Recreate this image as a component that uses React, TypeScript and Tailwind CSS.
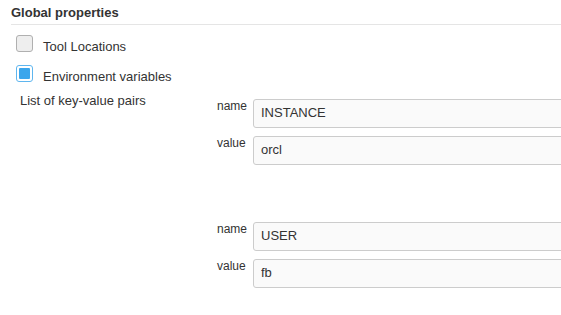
import { useState } from 'react';

const pairs = [
  { name: 'INSTANCE', value: 'orcl' },
  { name: 'USER', value: 'fb' },
];

function Checkbox({ checked, label }: { checked: boolean; label: string }) {
  return (
    <label className="flex items-start h-[30px]">
      <span
        className={`ml-[16px] mt-[10px] w-[17px] h-[17px] rounded-[3px] border flex items-center justify-center ${
          checked ? 'border-[#5fb6ef] bg-white' : 'border-[#b0b0b0] bg-[#eeeeee]'
        }`}
      >
        {checked && <span className="w-[11px] h-[11px] bg-[#3ba6ec] rounded-[1px]" />}
      </span>
      <span className="ml-[10px] mt-[14px] leading-[15px]">{label}</span>
    </label>
  );
}

function Field({ label, value }: { label: string; value: string }) {
  return (
    <div className="flex items-start">
      <div className="w-[36px] text-[12px] leading-[15px]">{label}</div>
      <input
        defaultValue={value}
        className="flex-1 h-[29px] -mr-[40px] px-[7px] pb-[2px] rounded-[3px] border border-[#cccccc] bg-[#fafafa] text-[13px] text-[#333] outline-none"
      />
    </div>
  );
}

export default function App() {
  const [env] = useState(true);
  return (
    <div className="w-[561px] h-[315px] overflow-hidden bg-white text-[#333] text-[13px] font-['Liberation_Sans',Arial,sans-serif]">
      <div className="pl-[11px] pt-[4px]">
        <div className="font-bold text-[13px] leading-[18px] pb-[2px] border-b border-[#e5e5e5]">Global properties</div>
      </div>
      <div>
        <Checkbox checked={false} label="Tool Locations" />
        <Checkbox checked={env} label="Environment variables" />
      </div>
      <div className="flex">
        <div className="w-[217px] pl-[20px] pt-[8px] leading-[15px]">List of key-value pairs</div>
        <div className="flex-1 flex flex-col pt-[14px]">
          {pairs.map((p, i) => (
            <div key={p.name} className={`flex flex-col gap-[8px] ${i > 0 ? 'mt-[57px]' : ''}`}>
              <Field label="name" value={p.name} />
              <Field label="value" value={p.value} />
            </div>
          ))}
        </div>
      </div>
    </div>
  );
}
